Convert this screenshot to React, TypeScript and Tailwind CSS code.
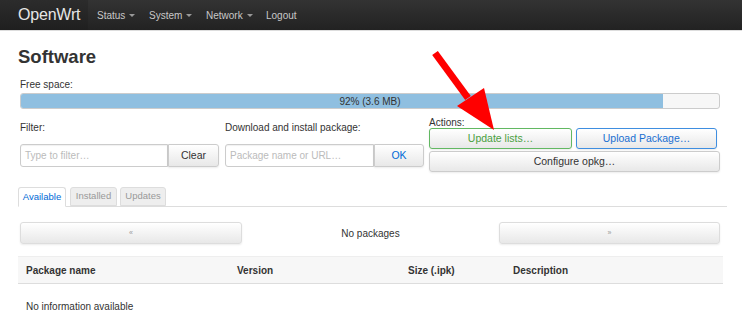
import React from "react";

const btn =
  "flex items-center justify-center border rounded-[3px] bg-gradient-to-b from-white to-[#e8e8e8] shadow-[0_1px_2px_rgba(0,0,0,0.08)] text-[10.5px]";

function NavItem({ label, w, caret = true }: { label: string; w: string; caret?: boolean }) {
  return (
    <div className={w + " flex items-center"}>
      <span>{label}</span>
      {caret && <span className="inline-block ml-[4px] border-t-[3px] border-t-[#999] border-x-[3px] border-x-transparent" />}
    </div>
  );
}

export default function App() {
  return (
    <div className="relative w-[742px] h-[330px] overflow-hidden bg-white text-[#333]" style={{ fontFamily: '"Liberation Sans", Arial, sans-serif' }}>
      {/* navbar */}
      <div className="h-[31px] flex items-center bg-gradient-to-b from-[#333] to-[#222] border-b border-[#ddd]">
        <div className="h-full w-[88px] flex items-center pl-[18px] bg-gradient-to-b from-[#2c2c2c] to-[#1f1f1f] text-[#e6e6e6] text-[16px] tracking-[-0.2px]">OpenWrt</div>
        <div className="flex items-center text-[10px] text-[#c8c8c8] ml-[9px]">
          <NavItem label="Status" w="w-[52px]" />
          <NavItem label="System" w="w-[57px]" />
          <NavItem label="Network" w="w-[60px]" />
          <NavItem label="Logout" w="w-[50px]" caret={false} />
        </div>
      </div>

      <div className="ml-[18px] w-[706px] text-[10px]">
        <h1 className="mt-[15px] text-[18.5px] leading-[22px] font-bold text-[#333]">Software</h1>
        <div className="mt-[11px] ml-[2px] leading-[12px]">Free space:</div>
        <div className="mt-[2px] ml-[2px] w-[700px] h-[16px] border border-[#ccc] rounded-[3px] bg-[#f7f7f7] relative overflow-hidden">
          <div className="h-full w-[92%] bg-[#8fbfe0]" />
          <div className="absolute inset-0 flex items-center justify-center text-[10px] text-[#333]">92% (3.6 MB)</div>
        </div>

        <div className="flex ml-[2px]">
          <div className="w-[199px] flex flex-col">
            <div className="mt-[13px] leading-[12px]">Filter:</div>
            <div className="mt-[10px] flex h-[23px]">
              <div className="flex-1 border border-[#ccc] rounded-l-[3px] flex items-center pl-[4px] text-[10px] text-[#bbb] shadow-[inset_0_1px_1px_rgba(0,0,0,0.06)]">Type to filter…</div>
              <div className={btn + " w-[51px] border-[#ccc] rounded-l-none text-[#333]"}>Clear</div>
            </div>
          </div>
          <div className="w-[199px] ml-[6px] flex flex-col">
            <div className="mt-[13px] leading-[12px]">Download and install package:</div>
            <div className="mt-[10px] flex h-[23px]">
              <div className="flex-1 border border-[#ccc] rounded-l-[3px] flex items-center pl-[4px] text-[10px] text-[#bbb] shadow-[inset_0_1px_1px_rgba(0,0,0,0.06)]">Package name or URL…</div>
              <div className={btn + " w-[50px] border-[#ccc] rounded-l-none text-[#0069d6]"}>OK</div>
            </div>
          </div>
          <div className="w-[291px] ml-[5px] flex flex-col">
            <div className="mt-[8px] leading-[11px]">Actions:</div>
            <div className="flex gap-[4px] h-[21px]">
              <div className={btn + " w-[143px] border-[#62b862] text-[#4a9f3f]"}>Update lists…</div>
              <div className={btn + " w-[141px] border-[#3f8ee0] text-[#1a6fd1]"}>Upload Package…</div>
            </div>
            <div className={btn + " mt-[2px] h-[21px] border-[#ccc] text-[#333]"}>Configure opkg…</div>
          </div>
        </div>

        {/* tabs */}
        <div className="mt-[15px] flex items-end border-b border-[#ddd] h-[20px] w-[709px] text-[9.5px]">
          <div className="w-[48px] h-[20px] -mb-px flex items-center justify-center border border-[#ddd] border-b-white rounded-t-[3px] bg-white text-[#0069d6]">Available</div>
          <div className="ml-[4px] w-[47px] h-[19px] flex items-center justify-center border border-[#ddd] rounded-t-[3px] bg-[#eee] text-[#999]">Installed</div>
          <div className="ml-[3px] w-[46px] h-[19px] flex items-center justify-center border border-[#ddd] rounded-t-[3px] bg-[#eee] text-[#999]">Updates</div>
        </div>

        {/* pager */}
        <div className="mt-[15px] ml-[2px] flex items-center h-[22px] w-[700px]">
          <div className={btn + " w-[222px] h-[22px] border-[#ddd] !text-[7px] text-[#999]"}>«</div>
          <div className="flex-1 text-center">No packages</div>
          <div className={btn + " w-[221px] h-[22px] border-[#ddd] !text-[7px] text-[#999]"}>»</div>
        </div>

        {/* table */}
        <div className="mt-[12px] w-[705px] h-[28px] bg-[#f7f7f7] border-t border-[#eee] border-b border-b-[#ddd] flex items-center font-bold">
          <div className="w-[219px] pl-[8px]">Package name</div>
          <div className="w-[171px]">Version</div>
          <div className="w-[105px]">Size (.ipk)</div>
          <div>Description</div>
        </div>
        <div className="mt-[17px] pl-[8px] leading-[12px]">No information available</div>
      </div>

      {/* red arrow annotation */}
      <svg className="absolute left-0 top-0 pointer-events-none" width="742" height="330">
        <line x1="435" y1="53" x2="468" y2="98" stroke="#ff0000" strokeWidth="7" />
        <polygon points="457,106 484,88 494,130" fill="#ff0000" />
      </svg>
    </div>
  );
}
